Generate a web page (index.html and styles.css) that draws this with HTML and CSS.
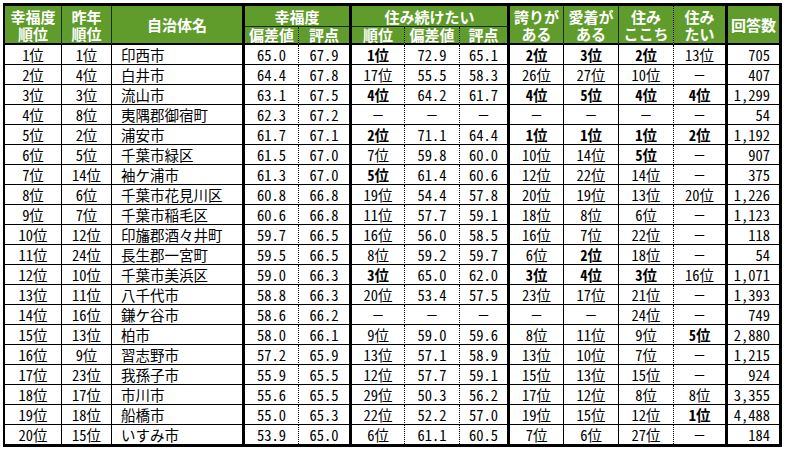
FILE: index.html
```html
<!DOCTYPE html>
<html lang="ja">
<head>
<meta charset="utf-8">
<title>幸福度ランキング</title>
<link rel="stylesheet" href="styles.css">
</head>
<body>
<div class="sheet">
<table class="rank">
<colgroup>
<col class="c-rank"><col class="c-prev"><col class="c-name">
<col class="c-dev"><col class="c-score">
<col class="c-srank"><col class="c-sdev"><col class="c-sscore">
<col class="c-pride"><col class="c-love"><col class="c-comfort"><col class="c-want">
<col class="c-count">
</colgroup>
<thead>
<tr>
<th rowspan="2" class="hd">幸福度<br>順位</th>
<th rowspan="2" class="hd">昨年<br>順位</th>
<th rowspan="2" class="hd thick">自治体名</th>
<th colspan="2" class="grp thick">幸福度</th>
<th colspan="3" class="grp thick">住み続けたい</th>
<th rowspan="2" class="hd">誇りが<br>ある</th>
<th rowspan="2" class="hd">愛着が<br>ある</th>
<th rowspan="2" class="hd dot">住み<br>ここち</th>
<th rowspan="2" class="hd thick">住み<br>たい</th>
<th rowspan="2" class="hd last">回答数</th>
</tr>
<tr>
<th class="sub dot">偏差値</th><th class="sub thick">評点</th>
<th class="sub dot">順位</th><th class="sub dot">偏差値</th><th class="sub thick">評点</th>
</tr>
</thead>
<tbody>
<tr><td>1位</td><td>1位</td><td>印西市</td><td>65.0</td><td>67.9</td><td class="b">1位</td><td>72.9</td><td>65.1</td><td class="b">2位</td><td class="b">3位</td><td class="b">2位</td><td>13位</td><td>705</td></tr>
<tr><td>2位</td><td>4位</td><td>白井市</td><td>64.4</td><td>67.8</td><td>17位</td><td>55.5</td><td>58.3</td><td>26位</td><td>27位</td><td>10位</td><td class="na">－</td><td>407</td></tr>
<tr><td>3位</td><td>3位</td><td>流山市</td><td>63.1</td><td>67.5</td><td class="b">4位</td><td>64.2</td><td>61.7</td><td class="b">4位</td><td class="b">5位</td><td class="b">4位</td><td class="b">4位</td><td>1,299</td></tr>
<tr><td>4位</td><td>8位</td><td>夷隅郡御宿町</td><td>62.3</td><td>67.2</td><td class="na">－</td><td class="na">－</td><td class="na">－</td><td class="na">－</td><td class="na">－</td><td class="na">－</td><td class="na">－</td><td>54</td></tr>
<tr><td>5位</td><td>2位</td><td>浦安市</td><td>61.7</td><td>67.1</td><td class="b">2位</td><td>71.1</td><td>64.4</td><td class="b">1位</td><td class="b">1位</td><td class="b">1位</td><td class="b">2位</td><td>1,192</td></tr>
<tr><td>6位</td><td>5位</td><td>千葉市緑区</td><td>61.5</td><td>67.0</td><td>7位</td><td>59.8</td><td>60.0</td><td>10位</td><td>14位</td><td class="b">5位</td><td class="na">－</td><td>907</td></tr>
<tr><td>7位</td><td>14位</td><td>袖ケ浦市</td><td>61.3</td><td>67.0</td><td class="b">5位</td><td>61.4</td><td>60.6</td><td>12位</td><td>22位</td><td>14位</td><td class="na">－</td><td>375</td></tr>
<tr><td>8位</td><td>6位</td><td>千葉市花見川区</td><td>60.8</td><td>66.8</td><td>19位</td><td>54.4</td><td>57.8</td><td>20位</td><td>19位</td><td>13位</td><td>20位</td><td>1,226</td></tr>
<tr><td>9位</td><td>7位</td><td>千葉市稲毛区</td><td>60.6</td><td>66.8</td><td>11位</td><td>57.7</td><td>59.1</td><td>18位</td><td>8位</td><td>6位</td><td class="na">－</td><td>1,123</td></tr>
<tr><td>10位</td><td>12位</td><td>印旛郡酒々井町</td><td>59.7</td><td>66.5</td><td>16位</td><td>56.0</td><td>58.5</td><td>16位</td><td>7位</td><td>22位</td><td class="na">－</td><td>118</td></tr>
<tr><td>11位</td><td>24位</td><td>長生郡一宮町</td><td>59.5</td><td>66.5</td><td>8位</td><td>59.2</td><td>59.7</td><td>6位</td><td class="b">2位</td><td>18位</td><td class="na">－</td><td>54</td></tr>
<tr><td>12位</td><td>10位</td><td>千葉市美浜区</td><td>59.0</td><td>66.3</td><td class="b">3位</td><td>65.0</td><td>62.0</td><td class="b">3位</td><td class="b">4位</td><td class="b">3位</td><td>16位</td><td>1,071</td></tr>
<tr><td>13位</td><td>11位</td><td>八千代市</td><td>58.8</td><td>66.3</td><td>20位</td><td>53.4</td><td>57.5</td><td>23位</td><td>17位</td><td>21位</td><td class="na">－</td><td>1,393</td></tr>
<tr><td>14位</td><td>16位</td><td>鎌ケ谷市</td><td>58.6</td><td>66.2</td><td class="na">－</td><td class="na">－</td><td class="na">－</td><td class="na">－</td><td class="na">－</td><td>24位</td><td class="na">－</td><td>749</td></tr>
<tr><td>15位</td><td>13位</td><td>柏市</td><td>58.0</td><td>66.1</td><td>9位</td><td>59.0</td><td>59.6</td><td>8位</td><td>11位</td><td>9位</td><td class="b">5位</td><td>2,880</td></tr>
<tr><td>16位</td><td>9位</td><td>習志野市</td><td>57.2</td><td>65.9</td><td>13位</td><td>57.1</td><td>58.9</td><td>13位</td><td>10位</td><td>7位</td><td class="na">－</td><td>1,215</td></tr>
<tr><td>17位</td><td>23位</td><td>我孫子市</td><td>55.9</td><td>65.5</td><td>12位</td><td>57.7</td><td>59.1</td><td>15位</td><td>13位</td><td>15位</td><td class="na">－</td><td>924</td></tr>
<tr><td>18位</td><td>17位</td><td>市川市</td><td>55.6</td><td>65.5</td><td>29位</td><td>50.3</td><td>56.2</td><td>17位</td><td>12位</td><td>8位</td><td>8位</td><td>3,355</td></tr>
<tr><td>19位</td><td>18位</td><td>船橋市</td><td>55.0</td><td>65.3</td><td>22位</td><td>52.2</td><td>57.0</td><td>19位</td><td>15位</td><td>12位</td><td class="b">1位</td><td>4,488</td></tr>
<tr><td>20位</td><td>15位</td><td>いすみ市</td><td>53.9</td><td>65.0</td><td>6位</td><td>61.1</td><td>60.5</td><td>7位</td><td>6位</td><td>27位</td><td class="na">－</td><td>184</td></tr>
</tbody>
</table>
</div>
</body>
</html>
```

FILE: styles.css
```css
html, body {
  margin: 0;
  padding: 0;
  background: #fff;
}

.sheet {
  padding: 3px 0 0 3px;
  width: 785px;
  overflow: hidden;
}

.rank {
  table-layout: fixed;
  border-collapse: separate;
  border-spacing: 0;
  width: 779px;
  border: 3px solid #000;
  border-left-width: 2px;
  font-family: "Noto Sans CJK JP", sans-serif;
  font-feature-settings: "hwid" 1;
  font-size: 14.5px;
  color: #000;
}

.c-rank { width: 57px; }
.c-prev { width: 50px; }
.c-name { width: 133px; }
.c-dev { width: 54px; }
.c-score { width: 53px; }
.c-srank { width: 53px; }
.c-sdev { width: 55px; }
.c-sscore { width: 50px; }
.c-pride { width: 54px; }
.c-love { width: 55px; }
.c-comfort { width: 55px; }
.c-want { width: 54px; }
.c-count { width: 51px; }

/* header */
.rank th {
  background: #5f9c2b;
  color: #fff;
  font-weight: bold;
  font-size: 15px;
  line-height: 17px;
  padding: 0;
  text-align: center;
  vertical-align: middle;
  border-right: 1px solid #1b2a10;
  border-bottom: 2px solid #000;
  white-space: nowrap;
}
.rank th.grp {
  height: 20px;
  border-bottom: 1px solid #1b2a10;
}
.rank th.sub {
  height: 16px;
  line-height: 16px;
}
.rank th.thick { border-right: 3px solid #000; }
.rank th.dot { border-right: 1px dotted #000; }
.rank th.last { border-right: 0; }

/* body */
.rank td {
  height: 19px;
  line-height: 19px;
  padding: 0;
  text-align: center;
  vertical-align: middle;
  border-right: 1px solid #000;
  border-bottom: 1px solid #000;
  white-space: nowrap;
  overflow: hidden;
}
.rank tbody tr:last-child td { border-bottom: 0; }

.rank td:nth-child(3) {
  text-align: left;
  padding-left: 9px;
}
.rank td:nth-child(13) {
  text-align: right;
  padding-right: 9px;
  border-right: 0;
}
.rank td:nth-child(3),
.rank td:nth-child(5),
.rank td:nth-child(8),
.rank td:nth-child(12) {
  border-right: 3px solid #000;
}
.rank td:nth-child(4),
.rank td:nth-child(6),
.rank td:nth-child(7),
.rank td:nth-child(11) {
  border-right: 1px dotted #000;
}

.rank td.b { font-weight: bold; }
.rank td.na { font-feature-settings: normal; font-size: 13px; }
```
